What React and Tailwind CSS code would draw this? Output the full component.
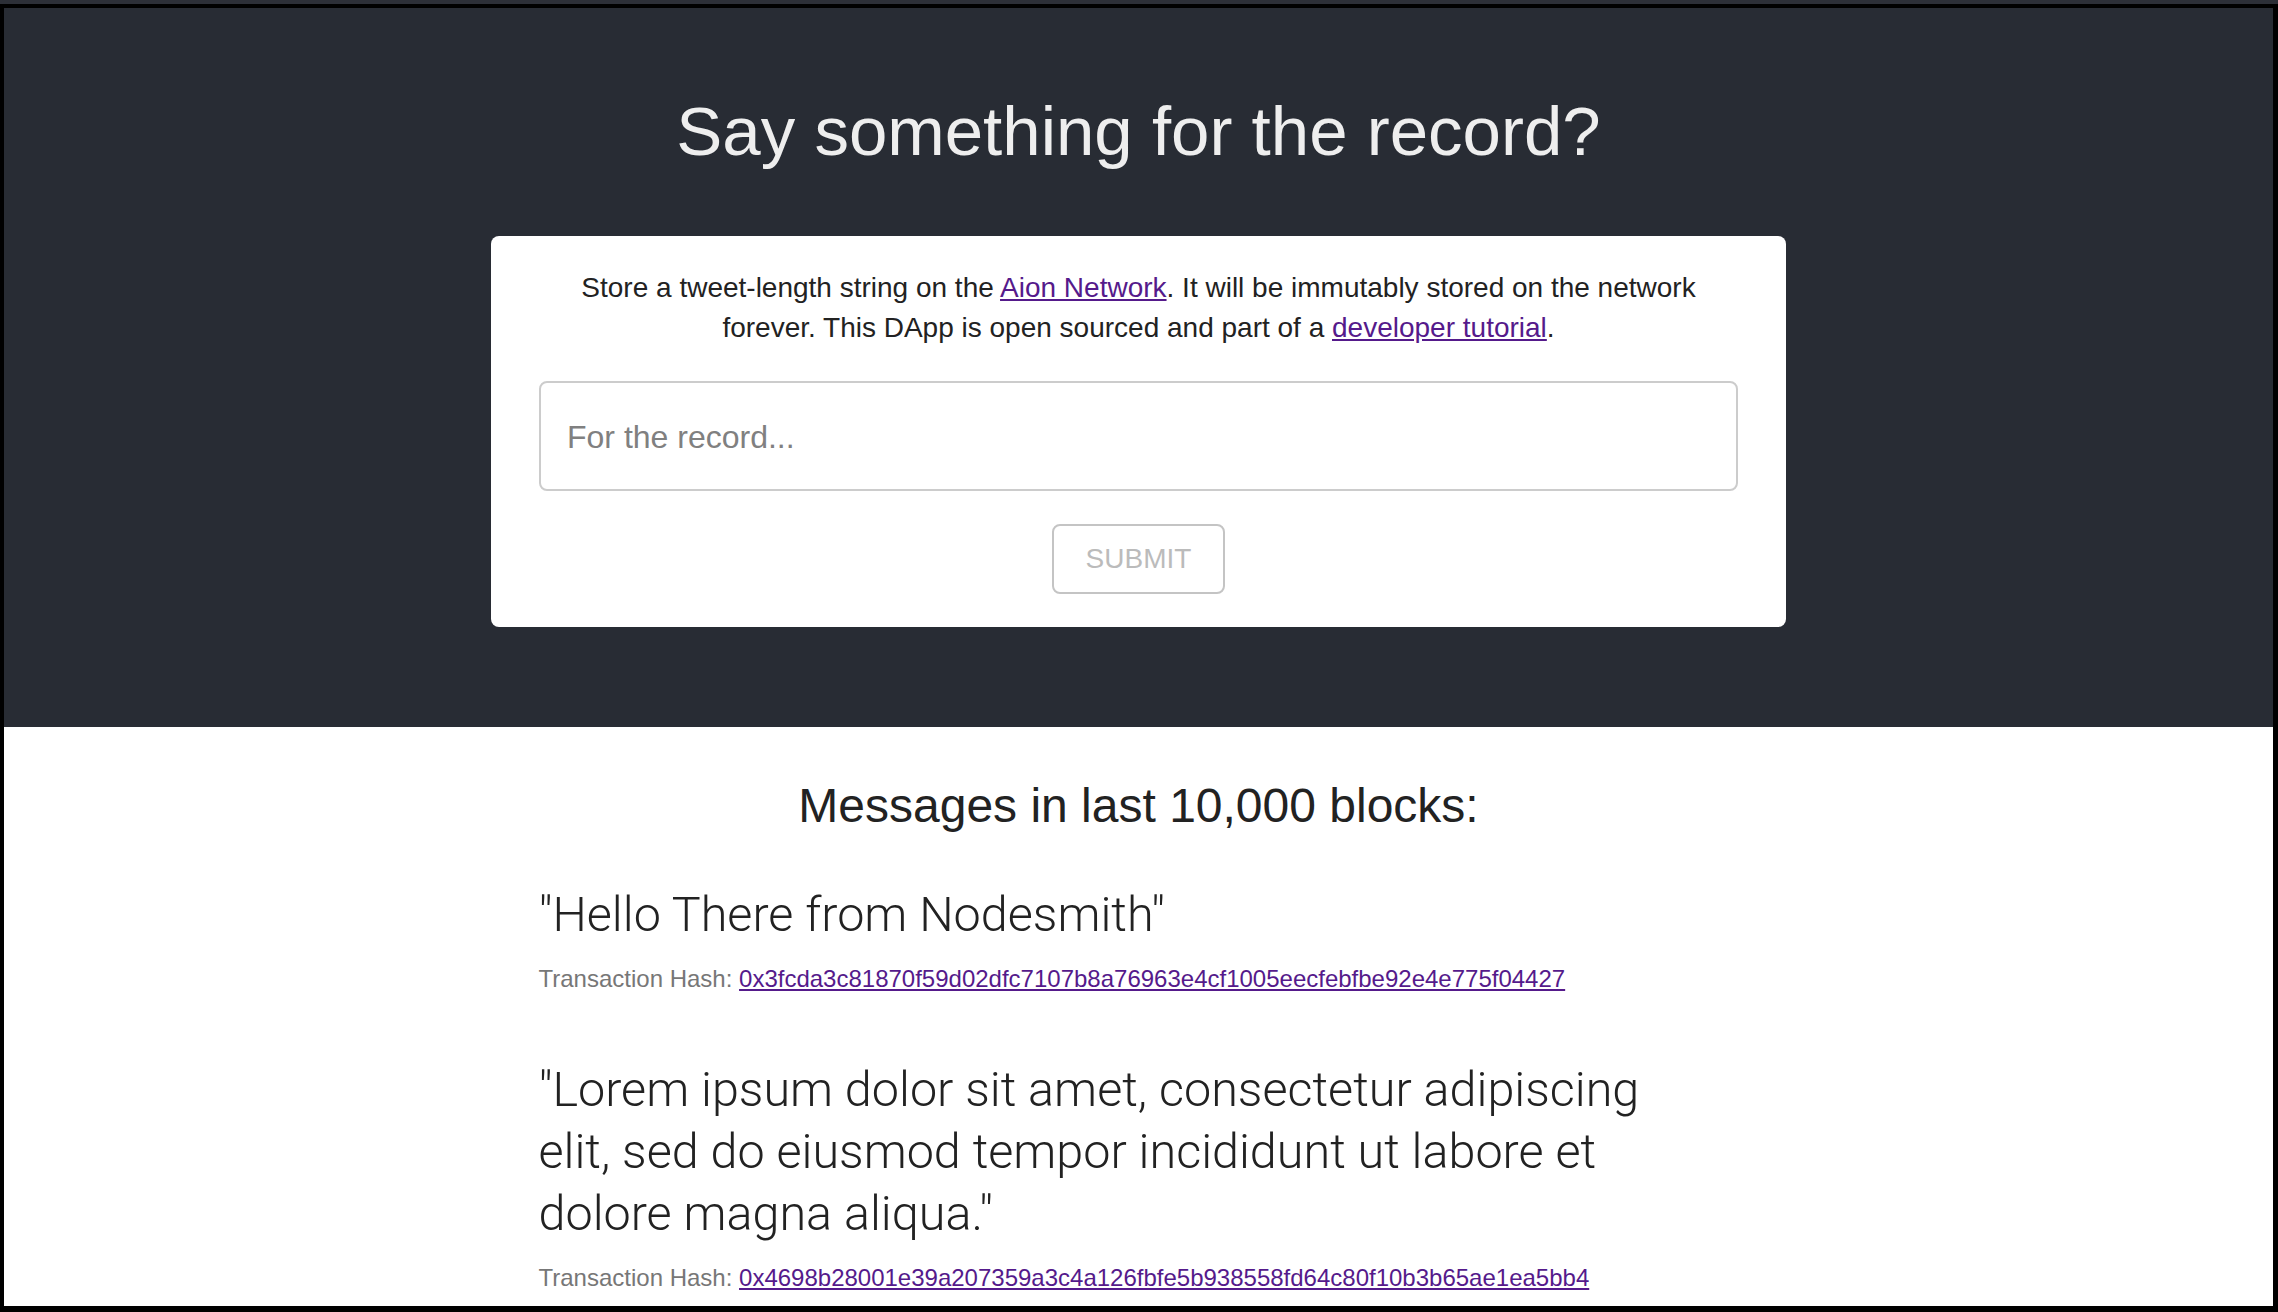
import React from "react";

const messages = [
  {
    text: '"Hello There from Nodesmith"',
    hash: "0x3fcda3c81870f59d02dfc7107b8a76963e4cf1005eecfebfbe92e4e775f04427",
  },
  {
    text: '"Lorem ipsum dolor sit amet, consectetur adipiscing elit, sed do eiusmod tempor incididunt ut labore et dolore magna aliqua."',
    hash: "0x4698b28001e39a207359a3c4a126fbfe5b938558fd64c80f10b3b65ae1ea5bb4",
  },
];

const Message = ({ text, hash, first }) => {
  return (
    <div className={first ? "mt-[52px]" : "mt-[63px]"}>
      <p className="max-w-[1140px] font-['Roboto',sans-serif] font-light text-[48.5px] leading-[62px] text-[#222]">
        {text}
      </p>
      <p className="mt-[16px] text-[24px] leading-[34px] text-[#777]">
        Transaction Hash:{" "}
        <a href="#" className="text-[#551a8b] underline">
          {hash}
        </a>
      </p>
    </div>
  );
};

const App = () => {
  return (
    <div className="w-[2278px] h-[1312px] bg-black font-['Liberation_Sans',Arial,sans-serif]">
      <div className="h-[4px] bg-[#2c2f37]" />
      <div className="pt-[4px] pl-[4px] pr-[5px] pb-[6px]">
        <div className="h-[1298px] overflow-hidden bg-white">
          <header className="h-[719px] bg-[#282c34] flex flex-col items-center pt-[86px]">
            <h1 className="text-[69px] leading-[76px] text-[#eeeeee]">
              Say something for the record?
            </h1>
            <div className="mt-[66px] w-[1295px] bg-white rounded-[8px] px-[48px] pt-[32px] pb-[33px] flex flex-col items-center">
              <p className="text-[28px] leading-[40px] text-[#222] text-center">
                Store a tweet-length string on the{" "}
                <a href="#" className="text-[#551a8b] underline">
                  Aion Network
                </a>
                . It will be immutably stored on the network
                <br />
                forever. This DApp is open sourced and part of a{" "}
                <a href="#" className="text-[#551a8b] underline">
                  developer tutorial
                </a>
                .
              </p>
              <input
                type="text"
                placeholder="For the record..."
                className="mt-[33px] w-full h-[110px] border-2 border-[#ccc] rounded-[8px] px-[26px] pt-[2px] text-[32px] text-[#333] placeholder:text-[#808080] outline-none"
              />
              <button
                disabled
                className="mt-[33px] w-[173px] h-[70px] border-2 border-[#c4c4c4] rounded-[8px] text-[28px] text-[#bbb] bg-white"
              >
                SUBMIT
              </button>
            </div>
          </header>
          <section className="flex flex-col items-center pt-[52px]">
            <h3 className="text-[48px] leading-[53px] text-[#222]">
              Messages in last 10,000 blocks:
            </h3>
            <div className="w-[1200px]">
              {messages.map((m, i) => (
                <Message key={m.hash} text={m.text} hash={m.hash} first={i === 0} />
              ))}
            </div>
          </section>
        </div>
      </div>
    </div>
  );
};

export default App;
